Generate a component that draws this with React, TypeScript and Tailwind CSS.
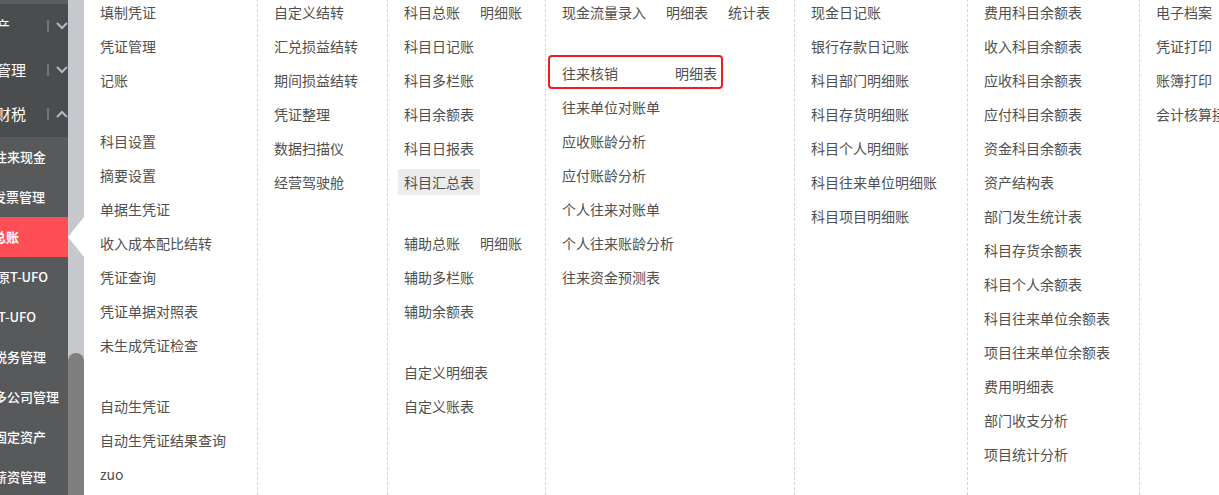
import React from "react";

type Item = { label: string; extra?: string[]; active?: boolean; boxed?: boolean };

const columns: { w: string; border: boolean; groups: Item[][] }[] = [
  {
    w: "w-[173px]",
    border: false,
    groups: [
      [{ label: "填制凭证" }, { label: "凭证管理" }, { label: "记账" }],
      [
        { label: "科目设置" },
        { label: "摘要设置" },
        { label: "单据生凭证" },
        { label: "收入成本配比结转" },
        { label: "凭证查询" },
        { label: "凭证单据对照表" },
        { label: "未生成凭证检查" },
      ],
      [{ label: "自动生凭证" }, { label: "自动生凭证结果查询" }, { label: "zuo" }],
    ],
  },
  {
    w: "w-[130px]",
    border: true,
    groups: [
      [
        { label: "自定义结转" },
        { label: "汇兑损益结转" },
        { label: "期间损益结转" },
        { label: "凭证整理" },
        { label: "数据扫描仪" },
        { label: "经营驾驶舱" },
      ],
    ],
  },
  {
    w: "w-[158px]",
    border: true,
    groups: [
      [
        { label: "科目总账", extra: ["明细账"] },
        { label: "科目日记账" },
        { label: "科目多栏账" },
        { label: "科目余额表" },
        { label: "科目日报表" },
        { label: "科目汇总表", active: true },
      ],
      [{ label: "辅助总账", extra: ["明细账"] }, { label: "辅助多栏账" }, { label: "辅助余额表" }],
      [{ label: "自定义明细表" }, { label: "自定义账表" }],
    ],
  },
  {
    w: "w-[249px]",
    border: true,
    groups: [
      [{ label: "现金流量录入", extra: ["明细表", "统计表"] }],
      [
        { label: "往来核销", extra: ["明细表"], boxed: true },
        { label: "往来单位对账单" },
        { label: "应收账龄分析" },
        { label: "应付账龄分析" },
        { label: "个人往来对账单" },
        { label: "个人往来账龄分析" },
        { label: "往来资金预测表" },
      ],
    ],
  },
  {
    w: "w-[173px]",
    border: true,
    groups: [
      [
        { label: "现金日记账" },
        { label: "银行存款日记账" },
        { label: "科目部门明细账" },
        { label: "科目存货明细账" },
        { label: "科目个人明细账" },
        { label: "科目往来单位明细账" },
        { label: "科目项目明细账" },
      ],
    ],
  },
  {
    w: "w-[172px]",
    border: true,
    groups: [
      [
        { label: "费用科目余额表" },
        { label: "收入科目余额表" },
        { label: "应收科目余额表" },
        { label: "应付科目余额表" },
        { label: "资金科目余额表" },
        { label: "资产结构表" },
        { label: "部门发生统计表" },
        { label: "科目存货余额表" },
        { label: "科目个人余额表" },
        { label: "科目往来单位余额表" },
        { label: "项目往来单位余额表" },
        { label: "费用明细表" },
        { label: "部门收支分析" },
        { label: "项目统计分析" },
      ],
    ],
  },
  {
    w: "flex-1",
    border: true,
    groups: [[{ label: "电子档案" }, { label: "凭证打印" }, { label: "账簿打印" }, { label: "会计核算接口" }]],
  },
];

const topMenus = [
  { label: "资产", ml: "ml-[-20px]", open: false },
  { label: "项目管理", ml: "ml-[-34px]", open: false },
  { label: "智能财税", ml: "ml-[-34px]", open: true },
];

const subMenus = [
  { label: "往来现金", ml: "ml-[-6px]" },
  { label: "发票管理", ml: "ml-[-7px]" },
  { label: "总账", ml: "ml-[-7px]", active: true },
  { label: "原T-UFO", ml: "ml-[-3px]" },
  { label: "T-UFO", ml: "ml-[-2px]" },
  { label: "税务管理", ml: "ml-[-6px]" },
  { label: "多公司管理", ml: "ml-[-6px]" },
  { label: "固定资产", ml: "ml-[-6px]" },
  { label: "薪资管理", ml: "ml-[-6px]" },
];

function Chevron({ up }: { up: boolean }) {
  return (
    <svg width="12" height="8" viewBox="0 0 12 8" className="ml-[7px]">
      <polyline
        points={up ? "1,7 6,2 11,7" : "1,1 6,6 11,1"}
        fill="none"
        stroke="#b5bac0"
        strokeWidth="2"
      />
    </svg>
  );
}

function Sidebar() {
  return (
    <div className="w-[68px] shrink-0 overflow-hidden bg-[#58595b] text-white">
      <div className="h-[4px] bg-[#5c5d5f]" />
      <div className="bg-[#4a4c4e] pb-[1px]">
        {topMenus.map((m) => (
          <div key={m.label} className="flex h-[44px] items-center">
            <span className={`${m.ml} shrink-0 whitespace-nowrap text-[15px]`}>{m.label}</span>
            <div className="ml-auto flex shrink-0 items-center">
              <span className="h-[12px] w-[2px] bg-[#74777a]" />
              <Chevron up={m.open} />
            </div>
          </div>
        ))}
      </div>
      {subMenus.map((m) => (
        <div
          key={m.label}
          className={`flex h-[40px] items-center ${m.active ? "bg-[#ff4f56] font-bold" : "font-medium"}`}
        >
          <span className={`${m.ml} shrink-0 whitespace-nowrap text-[13px]`}>{m.label}</span>
        </div>
      ))}
    </div>
  );
}

function Scrollbar() {
  return (
    <div className="relative flex w-[16px] shrink-0 flex-col bg-[#c5c8cc]">
      {/* active pointer */}
      <div className="absolute left-0 top-[217px] h-0 w-0 border-y-[20px] border-r-[16px] border-y-transparent border-r-white" />
      <div className="mt-[353px] flex-1 rounded-t-[8px] bg-[#7f7f7f]" />
    </div>
  );
}

function MenuItem({ item }: { item: Item }) {
  if (item.boxed) {
    return (
      <div className="relative flex h-[26px] w-[155px] items-center justify-between">
        <span>{item.label}</span>
        {item.extra?.map((e) => (
          <span key={e}>{e}</span>
        ))}
        <div className="absolute -bottom-[3px] -left-[14px] -right-[6px] -top-[5px] rounded-[4px] border-2 border-[#f21c1f]" />
      </div>
    );
  }
  return (
    <div className="flex h-[26px] items-center gap-[20px] whitespace-nowrap">
      <span className={item.active ? "-ml-[6px] flex h-[26px] items-center bg-[#ececec] px-[6px]" : ""}>
        {item.label}
      </span>
      {item.extra?.map((e) => (
        <span key={e}>{e}</span>
      ))}
    </div>
  );
}

export default function App() {
  return (
    <div className="flex h-[495px] w-[1219px] overflow-hidden bg-white font-['Noto_Sans_CJK_SC','Liberation_Sans',sans-serif]">
      <Sidebar />
      <Scrollbar />

      {/* Menu columns */}
      <div className="flex min-w-0 flex-1 text-[14px] text-[#505050]">
        {columns.map((col, ci) => (
          <div
            key={ci}
            className={`${col.w} -mt-[1px] flex shrink-0 flex-col gap-[35px] overflow-hidden pl-[16px] ${
              col.border ? "border-l border-dashed border-[#d4d4d4]" : ""
            }`}
          >
            {col.groups.map((g, gi) => (
              <div key={gi} className="flex flex-col gap-[8px]">
                {g.map((item) => (
                  <MenuItem key={item.label} item={item} />
                ))}
              </div>
            ))}
          </div>
        ))}
      </div>
    </div>
  );
}
